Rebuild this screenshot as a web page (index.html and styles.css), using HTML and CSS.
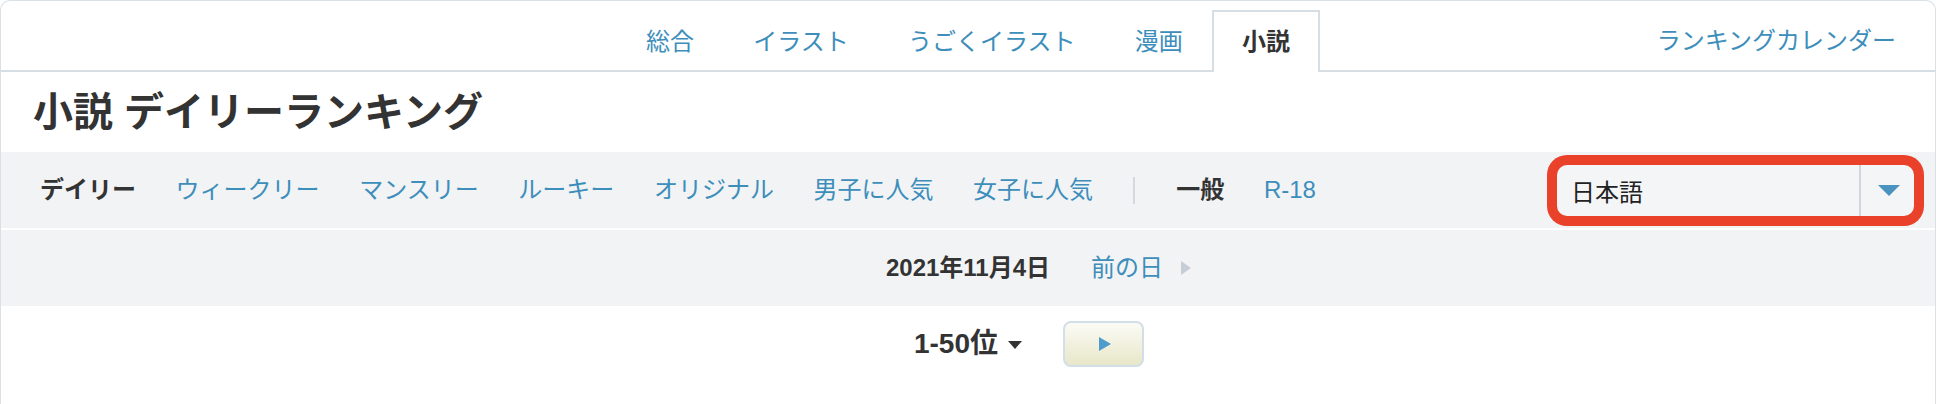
FILE: index.html
```html
<!DOCTYPE html>
<html lang="ja">
<head>
<meta charset="utf-8">
<title>小説 デイリーランキング</title>
<link rel="stylesheet" href="styles.css">
</head>
<body>
<div class="page">
  <header class="tabbar">
    <div class="tabbar-side"></div>
    <nav class="tabs">
      <a class="tab">総合</a>
      <a class="tab">イラスト</a>
      <a class="tab">うごくイラスト</a>
      <a class="tab">漫画</a>
      <a class="tab tab-active">小説</a>
    </nav>
    <a class="calendar">ランキングカレンダー</a>
  </header>

  <h1 class="title">小説 デイリーランキング</h1>

  <div class="band filters">
    <ul class="modes">
      <li class="mode mode-current">デイリー</li>
      <li class="mode"><a>ウィークリー</a></li>
      <li class="mode"><a>マンスリー</a></li>
      <li class="mode"><a>ルーキー</a></li>
      <li class="mode"><a>オリジナル</a></li>
      <li class="mode"><a>男子に人気</a></li>
      <li class="mode"><a>女子に人気</a></li>
      <li class="sep"></li>
      <li class="mode mode-current">一般</li>
      <li class="mode"><a>R-18</a></li>
    </ul>
    <div class="lang-select">
      <span class="lang-label">日本語</span>
      <span class="lang-arrow"><span class="tri-down"></span></span>
    </div>
  </div>

  <div class="band daterow">
    <div class="date-side"></div>
    <strong class="date">2021年11月4日</strong>
    <div class="date-next">
      <a class="prev-link">前の日</a>
      <span class="tri-right-gray"></span>
    </div>
  </div>

  <div class="pager">
    <div class="pager-side"></div>
    <div class="range">
      <span class="range-text">1-50位</span>
      <span class="tri-down-dark"></span>
    </div>
    <div class="pager-next">
      <button class="next-btn" type="button"><span class="tri-right-blue"></span></button>
    </div>
  </div>
</div>
</body>
</html>
```

FILE: styles.css
```css
* { box-sizing: border-box; }

html, body {
  margin: 0;
  padding: 0;
  background: #ffffff;
}

body {
  font-family: "Liberation Sans", "Noto Sans CJK JP", sans-serif;
  color: #333333;
  font-size: 24px;
}

a { color: #3d8ebb; text-decoration: none; }

.page {
  min-height: 404px;
  border: 1px solid #d9e0e6;
  border-bottom: 0;
  border-radius: 10px 10px 0 0;
}

/* top tab bar */
.tabbar {
  display: grid;
  grid-template-columns: 1fr auto 1fr;
  height: 71px;
  border-bottom: 2px solid #d6dde3;
}

.tabs {
  display: flex;
  align-self: end;
}

.tab {
  display: flex;
  align-items: center;
  justify-content: center;
  height: 62px;
  margin-bottom: -2px;
  padding: 0 27.6px;
  border: 2px solid transparent;
  border-bottom: 0;
  font-size: 24px;
  line-height: 1;
  color: #3d8ebb;
}

.tab-active {
  background: #ffffff;
  border-color: #d6dde3;
  color: #333333;
  font-weight: 700;
}

.calendar {
  justify-self: end;
  align-self: center;
  margin-top: 10px;
  padding-right: 39px;
  font-size: 24px;
  line-height: 1;
}

/* title */
.title {
  margin: 0;
  height: 80px;
  padding-left: 32px;
  font-size: 40px;
  line-height: 80px;
  font-weight: 700;
  color: #333333;
}

/* gray bands */
.band {
  background: #f2f3f5;
  height: 76px;
}

.filters {
  display: flex;
  align-items: center;
  padding: 0 21px 0 39px;
  margin-bottom: 2px;
}

.modes {
  display: flex;
  align-items: center;
  gap: 39.6px;
  list-style: none;
  margin: 0;
  padding: 0;
  font-size: 24px;
  line-height: 1;
}

.mode-current {
  font-weight: 700;
  color: #333333;
}

.sep {
  width: 2px;
  height: 27px;
  background: #d4d9de;
  margin-right: 2px;
}

.lang-select {
  margin-left: auto;
  display: flex;
  align-items: stretch;
  width: 357px;
  height: 51px;
  background: #f4f5f7;
  border-radius: 10px;
  box-shadow: 0 0 0 10px #e9412a;
}

.lang-label {
  flex: 1;
  display: flex;
  align-items: center;
  padding-left: 14px;
  font-size: 24px;
  color: #222222;
}

.lang-arrow {
  width: 55px;
  display: flex;
  align-items: center;
  justify-content: center;
  border-left: 2px solid #cfd6dd;
}

.tri-down {
  width: 0;
  height: 0;
  border-left: 11px solid transparent;
  border-right: 11px solid transparent;
  border-top: 11px solid #4a92c0;
  margin-left: 2px;
}

/* date row */
.daterow {
  display: grid;
  grid-template-columns: 1fr auto 1fr;
  align-items: center;
}

.date {
  font-size: 24px;
  font-weight: 700;
  color: #333333;
  line-height: 1;
}

.date-next {
  display: flex;
  align-items: center;
  gap: 18px;
  padding-left: 41px;
}

.prev-link {
  font-size: 24px;
  line-height: 1;
}

.tri-right-gray {
  width: 0;
  height: 0;
  border-top: 7px solid transparent;
  border-bottom: 7px solid transparent;
  border-left: 10px solid #c6cdd4;
}

/* pager */
.pager {
  display: grid;
  grid-template-columns: 1fr auto 1fr;
  align-items: center;
  height: 76px;
}

.range {
  display: flex;
  align-items: center;
  gap: 10px;
}

.range-text {
  font-size: 28px;
  font-weight: 700;
  line-height: 1;
  color: #333333;
}

.tri-down-dark {
  width: 0;
  height: 0;
  border-left: 7.5px solid transparent;
  border-right: 7.5px solid transparent;
  border-top: 8px solid #333333;
  margin-top: 2px;
}

.pager-next {
  padding-left: 41px;
  display: flex;
  align-items: center;
}

.next-btn {
  width: 81px;
  height: 46px;
  padding: 0;
  margin: 0;
  border: 2px solid #d2dee8;
  border-radius: 8px;
  background: linear-gradient(#fbfbf6, #e8e7c9);
  display: flex;
  align-items: center;
  justify-content: center;
}

.tri-right-blue {
  width: 0;
  height: 0;
  border-top: 7.5px solid transparent;
  border-bottom: 7.5px solid transparent;
  border-left: 12px solid #4d9ccc;
  margin-left: 2px;
}
```
